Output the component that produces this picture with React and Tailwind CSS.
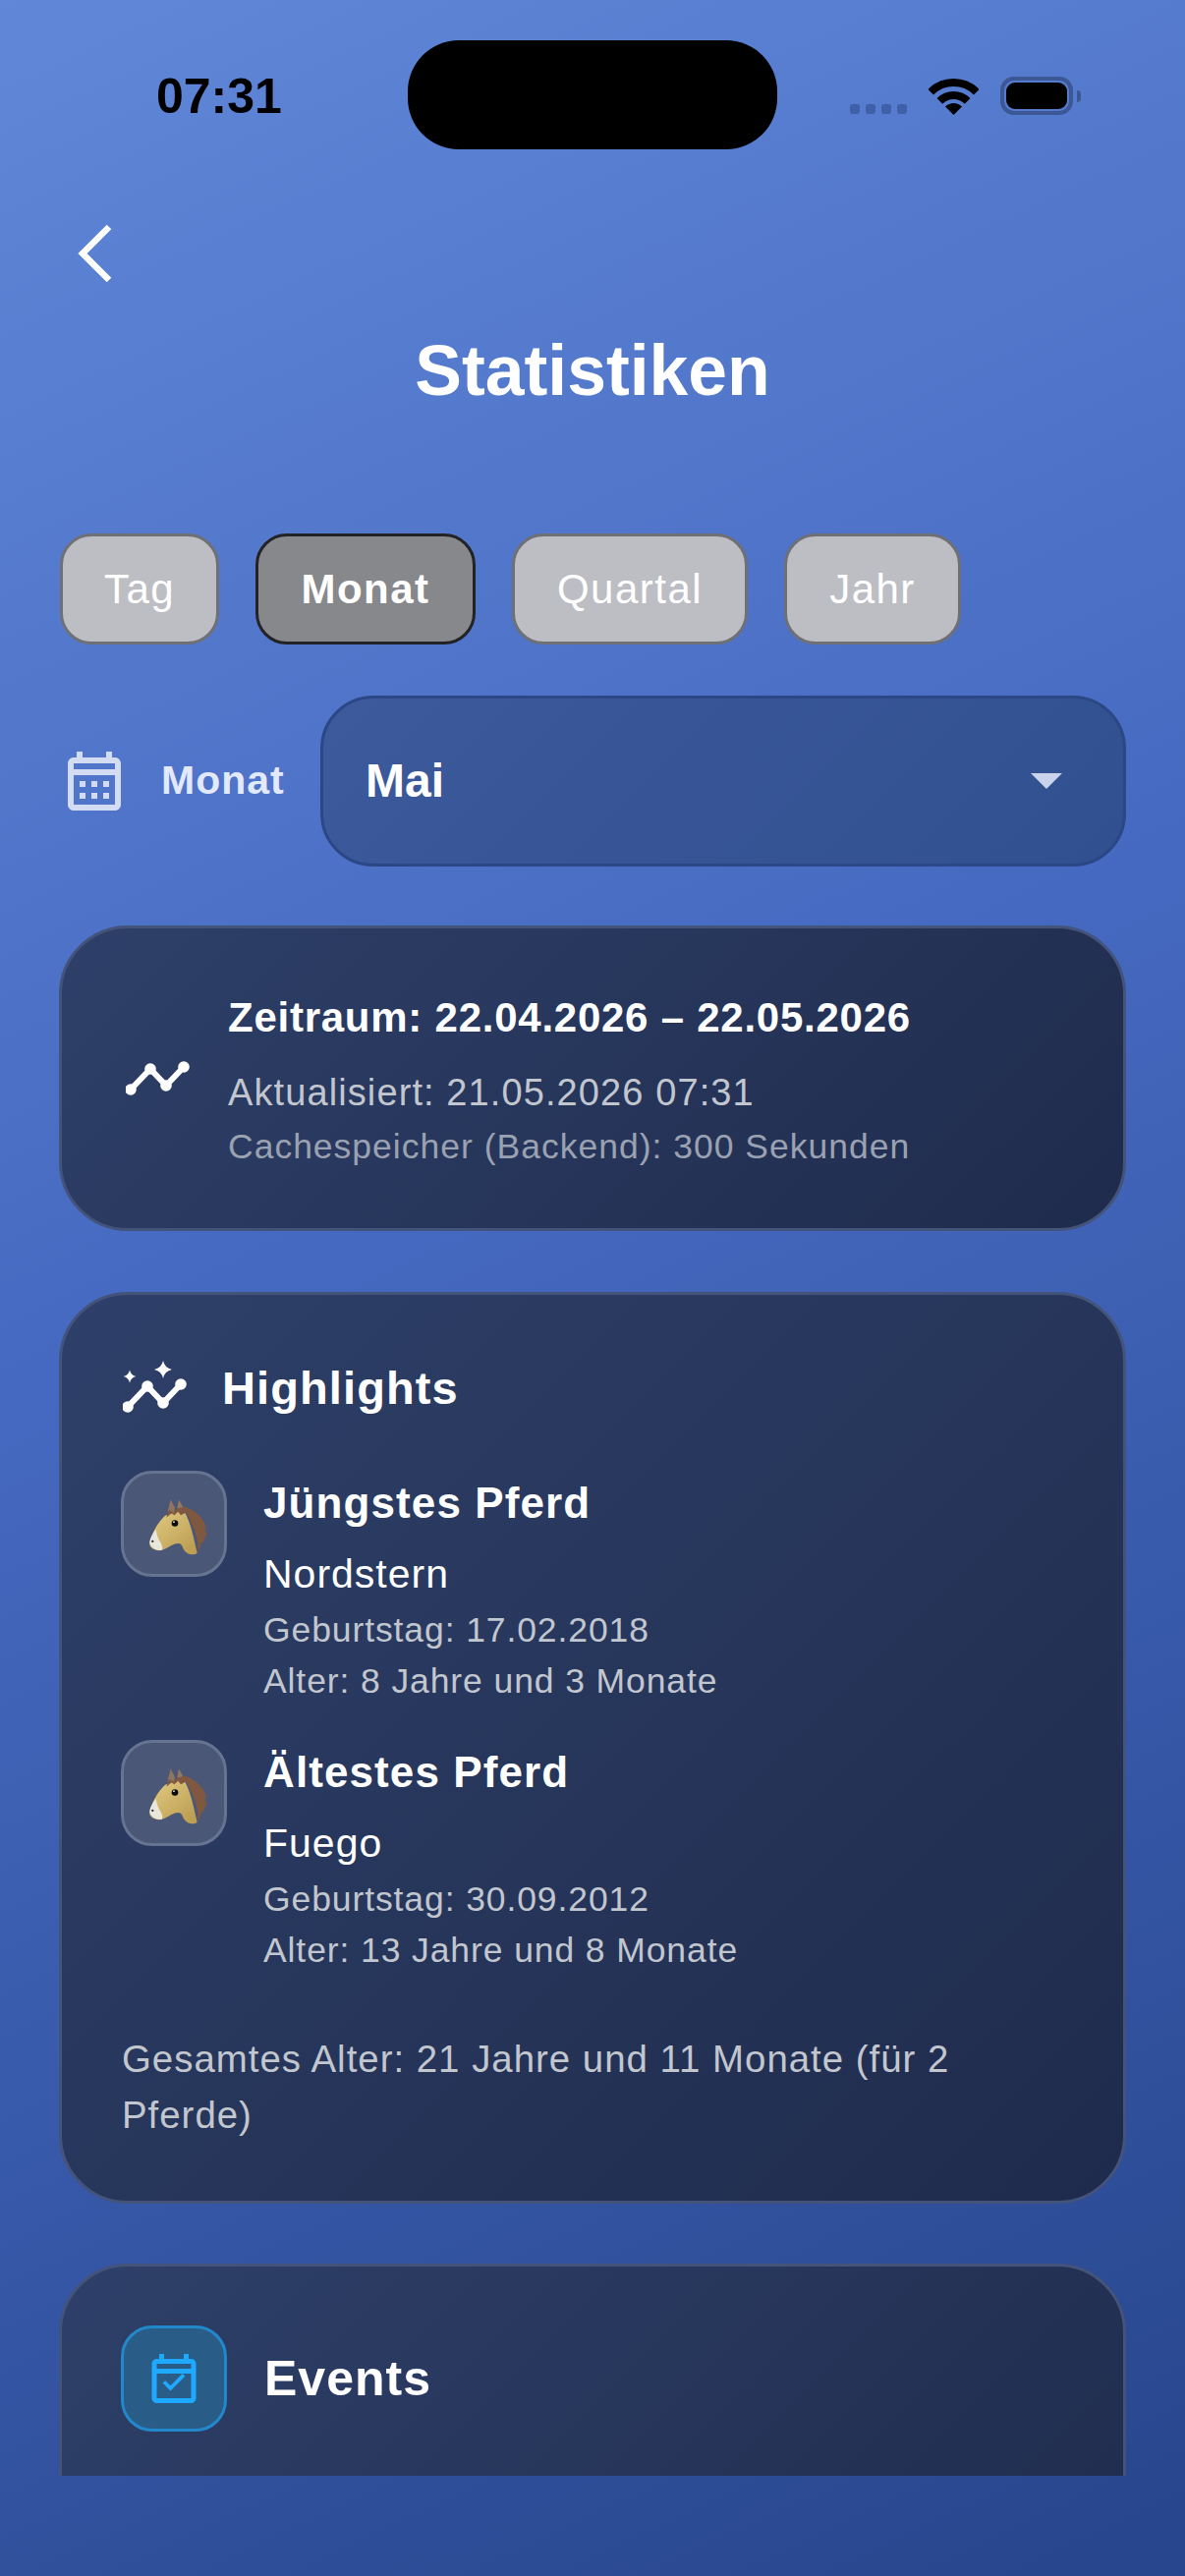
import React from 'react';

const sans = "font-['Liberation_Sans',Arial,sans-serif]";

const HorseIcon = () => (
  <svg width="80" height="75" viewBox="-13 -4.5 240 225">
    <defs>
      <linearGradient id="horseCoat" x1="0.1" y1="0.1" x2="0.8" y2="0.9">
        <stop offset="0" stopColor="#dfc87f" />
        <stop offset="1" stopColor="#bea055" />
      </linearGradient>
    </defs>
    <path d="M88 68 L97 32 L110 58 L106 78Z" fill="#8f7560" />
    <path d="M115 72 L122 32 L137 60 L136 90Z" fill="#957860" />
    <path
      d="M34 160 C42 130 60 100 80 82 L135 62 C152 90 162 120 178 196 C165 206 140 200 132 174 C128 165 120 165 110 168 C95 172 85 186 62 188 C42 188 28 175 34 160Z"
      fill="url(#horseCoat)"
    />
    <path
      d="M52 124 C44 136 33 150 33 165 C36 180 55 190 70 187 C75 180 70 168 63 158 C57 148 54 136 52 124Z"
      fill="#e9e6dc"
    />
    <path
      d="M84 88 L92 64 L106 72 L116 60 L140 55 C165 60 195 85 205 115 L202 130 L208 135 L198 160 L192 165 L180 195 L180 165 C174 130 158 95 144 72 L128 80 L120 70 L108 80 L100 74Z"
      fill="#80583f"
    />
    <circle cx="110" cy="105" r="10" fill="#0b0b0b" />
    <circle cx="107" cy="101" r="2.5" fill="#ffffff" />
    <circle cx="42" cy="160" r="3.5" fill="#333333" />
  </svg>
);

const GraphLine = () => (
  <g fill="#ffffff">
    <path d="M5 30 L25 9 L41 26 L59 7" fill="none" stroke="#ffffff" strokeWidth="6" strokeLinejoin="round" />
    <circle cx="5" cy="30" r="5.8" />
    <circle cx="25" cy="9" r="5.8" />
    <circle cx="41" cy="26" r="5.8" />
    <circle cx="59" cy="7" r="5.8" />
  </g>
);

const Sparkle = ({ x, y, r }) => (
  <path
    d={`M${x} ${y - r} Q${x + r * 0.18} ${y - r * 0.18} ${x + r} ${y} Q${x + r * 0.18} ${y + r * 0.18} ${x} ${y + r} Q${x - r * 0.18} ${y + r * 0.18} ${x - r} ${y} Q${x - r * 0.18} ${y - r * 0.18} ${x} ${y - r}Z`}
    fill="#ffffff"
  />
);

const Tab = ({ label, active, className }) => (
  <div
    className={`h-[113px] flex items-center justify-center rounded-[32px] border-[3px] text-white text-[42px] tracking-[1.5px] ${
      active ? 'border-[#232326] bg-[#87888c] font-bold' : 'border-[#6f7076] bg-[#bdbec3]'
    } ${className}`}
  >
    {label}
  </div>
);

const HorseRow = ({ title, name, birthday, age, className }) => (
  <div className={`flex ${className}`}>
    <div className="w-[108px] h-[108px] shrink-0 flex items-center justify-center rounded-[32px] border-[3px] border-[#667391] bg-[#4a5777] mt-[1px]">
      <HorseIcon />
    </div>
    <div className="ml-[37px] mt-[2px]">
      <div className="text-[44px] leading-[64px] font-bold text-white tracking-[1.1px]">{title}</div>
      <div className="mt-[8px] text-[41px] leading-[64px] text-white tracking-[1px]">{name}</div>
      <div className="-mt-[1px] text-[35.5px] leading-[52px] text-[#c2c6cf] tracking-[0.9px]">{birthday}</div>
      <div className="text-[35.5px] leading-[52px] text-[#c2c6cf] tracking-[0.9px]">{age}</div>
    </div>
  </div>
);

const App = () => {
  return (
    <div
      className={`w-[1206px] h-[2622px] overflow-hidden bg-[linear-gradient(155deg,#6087d8_0%,#4569c0_45%,#27458c_100%)] ${sans}`}
    >
      {/* status bar */}
      <div className="h-[152px] pt-[41px] flex">
        <div className="ml-[159px] w-[256px] pt-[32px] text-[50px] leading-[50px] font-bold text-black">07:31</div>
        <div className="w-[376px] h-[111px] rounded-[52px] bg-black" />
        <div className="ml-[74px] pt-[38px] flex items-start">
          <div className="mt-[27px] flex gap-[6px]">
            <div className="w-[10px] h-[10px] rounded-[3px] bg-[#3f5fa8]" />
            <div className="w-[10px] h-[10px] rounded-[3px] bg-[#3f5fa8]" />
            <div className="w-[10px] h-[10px] rounded-[3px] bg-[#3f5fa8]" />
            <div className="w-[10px] h-[10px] rounded-[3px] bg-[#3f5fa8]" />
          </div>
          <svg className="ml-[22px] mt-[1px]" width="51" height="37" viewBox="0 0 51 37">
            <path d="M2.2 13.7A33 33 0 0 1 48.8 13.7" fill="none" stroke="#000" strokeWidth="8" />
            <path d="M11.36 22.86A20 20 0 0 1 39.64 22.86" fill="none" stroke="#000" strokeWidth="8" />
            <path d="M25.5 37L17 28.5A12 12 0 0 1 34 28.5Z" fill="#000" />
          </svg>
          <div className="ml-[22px] -mt-[1px] w-[74px] h-[39px] rounded-[14px] border-[4px] border-[#3b5795] p-[2px]">
            <div className="w-full h-full rounded-[9px] bg-black" />
          </div>
          <div className="ml-[4px] mt-[13px] w-[4px] h-[12px] rounded-r-[4px] bg-[#3b5795]" />
        </div>
      </div>

      {/* header */}
      <div className="mt-[76px] pl-[79px]">
        <svg width="36" height="60" viewBox="0 0 36 60" className="block">
          <path d="M32 3 L5 30 L32 57" fill="none" stroke="#ffffff" strokeWidth="6.5" />
        </svg>
      </div>
      <div className="mt-[49px] text-center text-[71.5px] leading-[80px] font-bold text-white">Statistiken</div>

      {/* period tabs */}
      <div className="mt-[126px] mx-[61px] flex gap-[37px]">
        <Tab label="Tag" className="w-[162px]" />
        <Tab label="Monat" active className="w-[224px]" />
        <Tab label="Quartal" className="w-[240px]" />
        <Tab label="Jahr" className="w-[180px]" />
      </div>

      {/* month picker */}
      <div className="mt-[52px] ml-[60px] mr-[60px] flex items-center">
        <svg width="72" height="72" viewBox="0 0 24 24" fill="#d3dcf3">
          <path d="M19 4h-1V2h-2v2H8V2H6v2H5c-1.1 0-2 .9-2 2v14c0 1.1.9 2 2 2h14c1.1 0 2-.9 2-2V6c0-1.1-.9-2-2-2zm0 16H5V10h14v10zm0-12H5V6h14v2zM7 12h2v2H7zm4 0h2v2h-2zm4 0h2v2h-2zM7 16h2v2H7zm4 0h2v2h-2zm4 0h2v2h-2z" />
        </svg>
        <div className="ml-[32px] w-[162px] text-[41px] font-bold text-[#e2e9fa] tracking-[1px]">Monat</div>
        <div className="flex-1 h-[174px] pl-[43px] pr-[62px] flex items-center justify-between rounded-[54px] border-[3px] border-[#2b4785] bg-[linear-gradient(135deg,#3c5a9c,#31508f)]">
          <span className="text-[48px] font-bold text-white">Mai</span>
          <span className="w-0 h-0 border-l-[16px] border-r-[16px] border-t-[16px] border-l-transparent border-r-transparent border-t-[#c9d3ec]" />
        </div>
      </div>

      {/* time range card */}
      <div className="mt-[60px] mx-[60px] h-[311px] flex items-center rounded-[70px] border-[3px] border-[#44537a] bg-[linear-gradient(135deg,#2e4069,#1f2b4c)] pl-[64px]">
        <svg width="65" height="37" viewBox="0 0 65 37" className="shrink-0 ml-[1px]">
          <GraphLine />
        </svg>
        <div className="ml-[39px] pt-[5px]">
          <div className="text-[42px] leading-[52px] font-bold text-white tracking-[0.75px]">Zeitraum: 22.04.2026 – 22.05.2026</div>
          <div className="mt-[24px] text-[38px] leading-[52px] text-[#c2c6cf] tracking-[1.1px]">Aktualisiert: 21.05.2026 07:31</div>
          <div className="mt-[5px] text-[35.5px] leading-[48px] text-[#9aa1b1] tracking-[1px]">Cachespeicher (Backend): 300 Sekunden</div>
        </div>
      </div>

      {/* highlights card */}
      <div className="mt-[62px] mx-[60px] h-[928px] rounded-[70px] border-[3px] border-[#44537a] bg-[linear-gradient(135deg,#2e4069,#1f2b4c)] pl-[60px] pr-[60px] pt-[67px]">
        <div className="flex items-center h-[56px]">
          <svg width="68" height="54" viewBox="0 0 68 54" className="shrink-0 ml-[2px] -mt-[2px]">
            <g transform="translate(0 17)">
              <GraphLine />
            </g>
            <Sparkle x={41} y={9} r={9} />
            <Sparkle x={7} y={16} r={6.5} />
          </svg>
          <div className="ml-[33px] text-[47px] font-bold text-white tracking-[1.1px]">Highlights</div>
        </div>
        <HorseRow
          className="mt-[55px]"
          title="Jüngstes Pferd"
          name="Nordstern"
          birthday="Geburtstag: 17.02.2018"
          age="Alter: 8 Jahre und 3 Monate"
        />
        <HorseRow
          className="mt-[33px]"
          title="Ältestes Pferd"
          name="Fuego"
          birthday="Geburtstag: 30.09.2012"
          age="Alter: 13 Jahre und 8 Monate"
        />
        <div className="mt-[56px] pl-[1px] text-[38.4px] leading-[57px] text-[#c2c6cf] tracking-[1px]">
          Gesamtes Alter: 21 Jahre und 11 Monate (für 2 Pferde)
        </div>
      </div>

      {/* events card, cut off by the scroll area */}
      <div className="mt-[61px] mx-[60px] h-[216px] overflow-hidden">
        <div className="h-[400px] rounded-[70px] border-[3px] border-[#44537a] bg-[linear-gradient(135deg,#2e4069,#1f2b4c)] pl-[60px] pt-[60px]">
          <div className="flex items-center">
            <div className="w-[108px] h-[108px] flex items-center justify-center rounded-[32px] border-[3px] border-[#2288cc] bg-[#2a5c88]">
              <svg width="60" height="60" viewBox="0 0 24 24" fill="#1fa9ff">
                <path d="M16.53 11.06L15.47 10l-4.88 4.88-2.12-2.12-1.06 1.06L10.59 17l5.94-5.94zM19 4h-1V2h-2v2H8V2H6v2H5c-1.11 0-1.99.9-1.99 2L3 20c0 1.1.89 2 2 2h14c1.1 0 2-.9 2-2V6c0-1.1-.9-2-2-2zm0 16H5V10h14v10zm0-12H5V6h14v2z" />
              </svg>
            </div>
            <div className="ml-[38px] text-[50px] font-bold text-white tracking-[1px]">Events</div>
          </div>
        </div>
      </div>
    </div>
  );
};

export default App;
